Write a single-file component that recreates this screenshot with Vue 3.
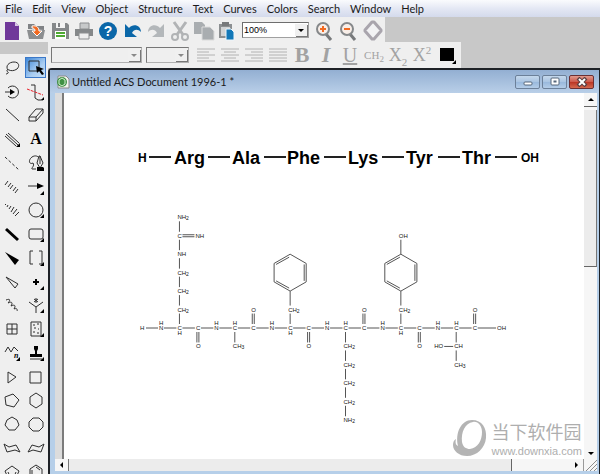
<template>
  <div class="app">
    <nav class="menubar">
      <button v-for="item in menus" :key="item" type="button">{{ item }}</button>
    </nav>

    <div class="main-toolbar">
      <div class="toolbar-panel">
        <button v-for="icon in mainIcons" :key="icon.name" type="button" class="tool-btn" :aria-label="icon.name">
          <svg width="24" height="24" viewBox="0 0 24 24">
            <component :is="s.t || 'path'" v-for="(s, i) in icon.shapes" :key="i" v-bind="s.a" />
            <text v-if="icon.text" x="12" y="18" text-anchor="middle" class="help-mark">{{ icon.text }}</text>
          </svg>
        </button>
        <div class="combo zoom-combo">
          <select v-model="zoom" aria-label="Zoom">
            <option>100%</option>
            <option>200%</option>
          </select>
          <span class="combo-arrow"></span>
        </div>
        <button v-for="icon in zoomIcons" :key="icon.name" type="button" class="tool-btn" :aria-label="icon.name">
          <svg width="24" height="24" viewBox="0 0 24 24">
            <component :is="s.t || 'path'" v-for="(s, i) in icon.shapes" :key="i" v-bind="s.a" />
          </svg>
        </button>
      </div>
    </div>

    <div class="workspace">
      <aside class="palette">
        <div class="palette-grid">
          <button
            v-for="(tool, index) in tools"
            :key="tool.name"
            type="button"
            :class="{ active: index === activeTool }"
            :aria-label="tool.name"
            @click="activeTool = index"
          >
            <svg width="24" height="24" viewBox="0 0 24 24">
              <path v-for="(p, i) in tool.paths" :key="i" :d="p.d" :class="p.c || 'line'" />
              <text v-if="tool.text" x="12" y="17" text-anchor="middle" class="tool-letter">{{ tool.text }}</text>
              <text v-if="tool.sub" x="14" y="17" class="tool-sub">{{ tool.sub }}</text>
              <path v-if="tool.flyout" d="M20 16v4h-4z" class="solid" />
            </svg>
          </button>
        </div>
      </aside>

      <div class="content">
        <div class="format-row">
          <div class="format-bar">
            <div class="combo font-combo dim">
              <select aria-label="Font"><option></option></select>
              <span class="combo-arrow"></span>
            </div>
            <div class="combo size-combo dim">
              <select aria-label="Font size"><option></option></select>
              <span class="combo-arrow"></span>
            </div>
            <button v-for="a in aligns" :key="a.name" type="button" class="format-btn" :aria-label="a.name">
              <svg width="20" height="16" viewBox="0 0 20 16"><path :d="a.d" class="align" /></svg>
            </button>
            <button type="button" class="format-btn bold">B</button>
            <button type="button" class="format-btn italic">I</button>
            <button type="button" class="format-btn underline">U</button>
            <button type="button" class="format-btn formula">CH<sub>2</sub></button>
            <button type="button" class="format-btn script">X<sub>2</sub></button>
            <button type="button" class="format-btn script">X<sup>2</sup></button>
            <button type="button" class="format-btn" aria-label="Color">
              <svg width="20" height="18" viewBox="0 0 20 18">
                <path d="M4 2h14v13H4z" fill="#000" />
                <path d="M20 14v4h-4z" fill="#000" stroke="#efefef" stroke-width="1" paint-order="stroke" />
              </svg>
            </button>
          </div>
        </div>

        <section class="window">
          <header class="titlebar">
            <svg class="doc-icon" width="14" height="14" viewBox="0 0 14 14">
              <path d="M2 1h8l3 3v9H2z" fill="#f4f4f0" stroke="#8a8a8a" />
              <circle cx="6" cy="7" r="5" fill="#3f9144" />
              <path d="M3 5l3-2 3 2v4l-3 2-3-2z" fill="none" stroke="#d4f0d0" />
            </svg>
            <h1>Untitled ACS Document 1996-1 *</h1>
            <div class="window-buttons">
              <button type="button" aria-label="Minimize">
                <svg width="12" height="10" viewBox="0 0 12 10"><rect x="2" y="5" width="8" height="3" rx="1" fill="#fff" stroke="#56677b" /></svg>
              </button>
              <button type="button" aria-label="Maximize">
                <svg width="12" height="10" viewBox="0 0 12 10">
                  <rect x="2" y="1" width="8" height="7" rx="1" fill="#fff" stroke="#56677b" />
                  <rect x="5" y="4" width="2" height="1" fill="#8fb0d4" stroke="#56677b" />
                </svg>
              </button>
              <button type="button" class="close" aria-label="Close">
                <svg width="12" height="10" viewBox="0 0 12 10">
                  <path d="M2 1l8 8M10 1l-8 8" stroke="#5b3f42" stroke-width="4" />
                  <path d="M3 2l6 6M9 2l-6 6" stroke="#fff" stroke-width="2" />
                </svg>
              </button>
            </div>
          </header>

          <div class="window-body">
            <div class="gutter"></div>
            <div class="canvas">
              <svg width="519" height="365" viewBox="0 0 519 365">
                <g class="sequence">
                  <text v-for="r in residues" :key="r.x" :x="r.x" :y="r.end ? 69 : 71" :class="{ end: r.end }">{{ r.label }}</text>
                  <path v-for="x in dashes" :key="x" :d="`M${x} 64h22`" />
                </g>
                <g class="bonds">
                  <path v-for="(d, i) in bonds" :key="i" :d="d" />
                </g>
                <g class="atoms">
                  <text v-for="(a, i) in atoms" :key="i" :x="a.x" :y="a.y" :text-anchor="a.anchor || 'start'">
                    {{ a.label }}<tspan v-if="a.sub" dy="1" class="sub">{{ a.sub }}</tspan>
                  </text>
                </g>
              </svg>
              <div class="watermark">
                <svg width="36" height="38" viewBox="0 0 36 38">
                  <path
                    fill-rule="evenodd"
                    d="M20 1C30 1 35 9 34 19C33 29 25 37 15 37C7 37 1 32 1 26C1 23 2 21 4 20C3 24 4 26 6 27C3 14 9 1 20 1ZM21 3C13 4 9 13 10 23C11 28 14 30 18 30C26 29 30 21 30 13C30 7 26 2 21 3Z"
                  />
                </svg>
                <div>
                  <p class="mark-name">当下软件园</p>
                  <p class="mark-url">www.downxia.com</p>
                </div>
              </div>
            </div>
            <div class="vscroll">
              <button type="button" aria-label="Scroll up"><i class="up"></i></button>
              <div class="vthumb"></div>
              <div class="track"></div>
              <button type="button" aria-label="Scroll down"><i class="down"></i></button>
            </div>
          </div>
          <div class="hscroll">
            <button type="button" aria-label="Scroll left"><i class="left"></i></button>
            <div class="hthumb"></div>
            <div class="track"></div>
            <button type="button" aria-label="Scroll right"><i class="right"></i></button>
            <svg class="grip" width="13" height="12" viewBox="0 0 13 12">
              <path d="M2 12L13 1M6 12L13 5M10 12L13 9" stroke="#8c8c8c" fill="none" />
            </svg>
          </div>
        </section>
      </div>
    </div>
  </div>
</template>

<script setup>
import { ref } from 'vue';

const menus = ['File', 'Edit', 'View', 'Object', 'Structure', 'Text', 'Curves', 'Colors', 'Search', 'Window', 'Help'];
const zoom = ref('100%');
const activeTool = ref(1);

const gray = '#808285';
const pale = '#a9adb0';
const blue = '#0b67a8';

// main toolbar
const mainIcons = [
  { name: 'New', shapes: [
    { a: { d: 'M5 4h10l4 4v14H5z', fill: '#70389a' } },
    { a: { d: 'M15 4v4h4z', fill: '#d9c7e6' } }
  ] },
  { name: 'Open', shapes: [
    { a: { d: 'M4 11V6h6l2 2h8v4', fill: gray } },
    { a: { d: 'M3 12h18l-2 9H5z', fill: '#8c8e90' } },
    { a: { d: 'M8 8c5-1 7 2 7 5h3l-5 5-5-5h3c0-2-1-3-3-3z', fill: '#f26a21', stroke: '#fff', 'stroke-width': 1 } }
  ] },
  { name: 'Save', shapes: [
    { a: { d: 'M4 5h15l2 2v14H4z', fill: '#85888a' } },
    { a: { d: 'M8 5h9v5H8z', fill: '#f4f4f4' } },
    { a: { d: 'M10 5h2v4h-2z', fill: gray } },
    { a: { d: 'M7 13h11v8H7z', fill: '#fff' } },
    { a: { d: 'M8 15h9M8 18h9', stroke: '#4faa32', 'stroke-width': 2 } }
  ] },
  { name: 'Print', shapes: [
    { a: { d: 'M8 5h9v6H8z', fill: '#c7c9ca', stroke: '#8c8e90' } },
    { a: { d: 'M3 11h18v7H3z', fill: '#85888a' } },
    { a: { d: 'M7 15h10v6H7z', fill: '#eeeeee', stroke: '#8c8e90' } }
  ] },
  { name: 'Help', text: '?', shapes: [
    { t: 'circle', a: { cx: 12, cy: 13, r: 9, fill: blue } }
  ] },
  { name: 'Undo', shapes: [
    { a: { d: 'M5 6v13h12l-5-4c2-4 6-4 9-1c0-7-8-9-12-4z', fill: blue } }
  ] },
  { name: 'Redo', shapes: [
    { a: { d: 'M20 6v13H8l5-4c-2-4-6-4-9-1c0-7 8-9 12-4z', fill: '#b3b7ba' } }
  ] },
  { name: 'Cut', shapes: [
    { a: { d: 'M6 4l10 14M18 4L8 18', stroke: '#b1b3b5', 'stroke-width': 3, fill: 'none' } },
    { t: 'circle', a: { cx: 7, cy: 19, r: 3, fill: '#efefef', stroke: '#b1b3b5', 'stroke-width': 2 } },
    { t: 'circle', a: { cx: 17, cy: 19, r: 3, fill: '#efefef', stroke: '#b1b3b5', 'stroke-width': 2 } }
  ] },
  { name: 'Copy', shapes: [
    { a: { d: 'M2 4h8l3 3v9H2z', fill: pale } },
    { a: { d: 'M10 9h8l4 4v9H10z', fill: pale, stroke: '#dcdcdc' } }
  ] },
  { name: 'Paste', shapes: [
    { a: { d: 'M3 6h13v14H3z', fill: '#8c8f91' } },
    { a: { d: 'M5 9h9v9H5z', fill: '#d2d4d5' } },
    { a: { d: 'M6 4h7v4H6z', fill: '#77797b' } },
    { a: { d: 'M10 11h5l3 3v8h-8z', fill: '#1378b8', stroke: '#eef6fb' } }
  ] }
];

const lens = [
  { a: { d: 'M14 16l5 6', stroke: '#77797b', 'stroke-width': 3 } },
  { t: 'circle', a: { cx: 11, cy: 11, r: 6, fill: '#f8eee8', stroke: '#85888a', 'stroke-width': 2 } }
];
const zoomIcons = [
  { name: 'Zoom in', shapes: [...lens, { a: { d: 'M8 11h6M11 8v6', stroke: '#f26a21', 'stroke-width': 2 } }] },
  { name: 'Zoom out', shapes: [...lens, { a: { d: 'M8 11h6', stroke: '#f26a21', 'stroke-width': 2 } }] },
  { name: 'Clean up', shapes: [
    { a: { d: 'M12 4h2l7 8v1l-7 8h-2l-7-8v-1z', fill: '#f2f2f4', stroke: '#a9a5ad', 'stroke-width': 3, 'stroke-linejoin': 'round' } }
  ] }
];

const aligns = [
  { name: 'Align left', d: 'M1 2h18M1 5h12M1 8h18M1 11h12M1 14h18' },
  { name: 'Center', d: 'M1 2h18M4 5h12M1 8h18M4 11h12M1 14h18' },
  { name: 'Align right', d: 'M1 2h18M7 5h12M1 8h18M7 11h12M1 14h18' },
  { name: 'Justify', d: 'M1 2h18M1 5h18M1 8h18M1 11h18M1 14h18' }
];

// tool palette, two per row
const tools = [
  { name: 'Lasso', paths: [{ d: 'M8 14C5 10 9 6 14 6C19 6 20 10 17 13C14 15 11 15 9 14C7 13 6 15 8 16C9 17 7 18 6 18' }] },
  { name: 'Marquee', paths: [{ d: 'M5 6h10v10H5z' }, { d: 'M12 11l8 3-3 1 3 4-2 1-3-4-2 2z', c: 'solid' }] },
  { name: 'Structure perspective', paths: [{ d: 'M8 8a6 6 0 1 1 0 8' }, { d: 'M5 12h5' }, { d: 'M10 9l5 3-5 3z', c: 'solid' }] },
  { name: 'Mass fragmentation', paths: [{ d: 'M7 5h4v13l3 2h5' }, { d: 'M3 9l16 6', c: 'red' }, { d: 'M20 17v3h-3z', c: 'solid' }] },
  { name: 'Solid bond', paths: [{ d: 'M6 6l13 12' }] },
  { name: 'Eraser', paths: [{ d: 'M5 14l7-8h7l-7 8zM5 14v4h7v-4M12 18l7-8V6' }] },
  { name: 'Multiple bonds', flyout: true, paths: [{ d: 'M5 9l11 10M8 6l11 10' }, { d: 'M6 7l12 11' }] },
  { name: 'Text', text: 'A', paths: [] },
  { name: 'Dashed bond', paths: [{ d: 'M5 6l14 13', c: 'dashed' }] },
  { name: 'Pen', flyout: true, paths: [{ d: 'M12 18H8c-1-1 3-3 1-6c-4 2-5-3-1-6c3-2 6-1 7 1M15 5l-2 7 3 5 3-5-3-7zM16 5v8' }, { d: 'M13 16h6v4h-6z', c: 'solid' }] },
  { name: 'Hashed bond', paths: [{ d: 'M5 10l3-4M8 12l3-4M10 14l3-4M13 16l3-4M15 18l3-4' }] },
  { name: 'Arrow', flyout: true, paths: [{ d: 'M4 11h10' }, { d: 'M13 8l7 3-7 3z', c: 'solid' }] },
  { name: 'Hashed wedge', paths: [{ d: 'M5 7l1-1M7 9l1-2M9 11l2-3M11 14l3-5M13 16l4-5M15 18l4-4' }] },
  { name: 'Orbitals', flyout: true, paths: [{ d: 'M19 12a7 7 0 1 1-14 0a7 7 0 1 1 14 0z' }] },
  { name: 'Bold bond', paths: [{ d: 'M6 7l12 11', c: 'bold' }] },
  { name: 'Drawing elements', flyout: true, paths: [{ d: 'M7 7h10a2 2 0 0 1 2 2v6a2 2 0 0 1-2 2H7a2 2 0 0 1-2-2V9a2 2 0 0 1 2-2z' }] },
  { name: 'Wedge', paths: [{ d: 'M5 6l14 8-4 5z', c: 'solid' }] },
  { name: 'Brackets', flyout: true, paths: [{ d: 'M9 5H6v13h3M15 5h3v13h-3' }] },
  { name: 'Hollow wedge', paths: [{ d: 'M6 7l12 7-3 4z' }] },
  { name: 'Chemical symbols', flyout: true, paths: [{ d: 'M9 12h6M12 9v6', c: 'plus' }] },
  { name: 'Wavy bond', paths: [{ d: 'M6 7c5-2 4 1 2 3c4-2 5 0 3 3c4-2 5 0 3 3c2-1 4 0 3 2' }] },
  { name: 'Query', flyout: true, paths: [{ d: 'M5 9l7 5 7-5M12 14v6M12 5v5M10 6l4 3M14 6l-4 3' }] },
  { name: 'Table', paths: [{ d: 'M7 7h10v10H7zM12 7v10M7 12h10' }] },
  { name: 'TLC plate', flyout: true, paths: [{ d: 'M7 5h10v14H7z' }, { d: 'M9 8h2M13 7h2M10 11h2M14 12h1M9 15h2M13 16h2' }] },
  { name: 'Acyclic chain', flyout: true, sub: 'n', paths: [{ d: 'M5 11l3-5 3 5 3-5 4 4' }] },
  { name: 'Templates', flyout: true, paths: [{ d: 'M10 5h4v3l-1 2v3h5v3H6v-3h5v-3l-1-2z', c: 'solid' }, { d: 'M6 18h12' }] },
  { name: 'Cyclopropane', paths: [{ d: 'M8 7l8 5-8 6z' }] },
  { name: 'Cyclobutane', paths: [{ d: 'M6 7h11v11H6z' }] },
  { name: 'Cyclopentane', paths: [{ d: 'M5 9l8-3 6 6-5 7-8-2z' }] },
  { name: 'Cyclohexane', paths: [{ d: 'M12 5l6 4v7l-6 4-6-4V9z' }] },
  { name: 'Cycloheptane', paths: [{ d: 'M12 5l5 3 2 5-4 5H9l-4-5 2-5z' }] },
  { name: 'Cyclooctane', paths: [{ d: 'M9 6h6l4 4v5l-4 4H9l-4-4v-5z' }] },
  { name: 'Chair left', paths: [{ d: 'M4 8l5 3 7-2 4 7-5-2-8 2z' }] },
  { name: 'Chair right', paths: [{ d: 'M20 8l-5 3-7-2-4 7 5-2 8 2z' }] },
  { name: 'Cyclopentadiene', paths: [{ d: 'M5 11l7-5 7 5-4 9H9zM8 12l3 7M16 12l-3 7' }] },
  { name: 'Benzene', paths: [{ d: 'M12 5l6 4v7l-6 4-6-4V9zM8 10v6M12 7l4 3' }] }
];

// peptide written as a sequence
const residues = [
  { label: 'H', x: 74, end: true },
  { label: 'Arg', x: 110 },
  { label: 'Ala', x: 168 },
  { label: 'Phe', x: 223 },
  { label: 'Lys', x: 284 },
  { label: 'Tyr', x: 342 },
  { label: 'Thr', x: 398 },
  { label: 'OH', x: 457, end: true }
];
const dashes = [85, 144, 200, 260, 318, 374, 431];

// expanded structure: backbone of 18 atoms on a fixed bond length
const step = 18.45;
const base = 235;
const px = (i) => 97 + i * step;
const py = (n) => base - n * step;
const atoms = [];
const bonds = [];

const atom = (x, y, label, sub) => atoms.push({ x: x - 2, y: y + 2, label, sub });
const hbond = (x1, x2, y) => bonds.push(`M${x1 + 3} ${y}H${x2 - 3}`);
const vbond = (x, y1, y2) => bonds.push(`M${x} ${y1 + 4}V${y2 - 4}`);

atoms.push({ x: 76, y: base + 2, label: 'H' });
hbond(79, px(0), base);
for (let r = 0; r < 6; r++) {
  const n = px(r * 3);
  const alpha = px(r * 3 + 1);
  const co = px(r * 3 + 2);
  // side chains point up on Arg, Phe and Tyr
  const up = r % 2 === 0;
  atom(n, base, 'N');
  atom(n, base - 5, 'H');
  atom(alpha, base, 'C');
  atom(alpha, up ? base + 5 : base - 5, 'H');
  atom(co, base, 'C');
  hbond(n, alpha, base);
  hbond(alpha, co, base);
  if (r < 5) hbond(co, px(r * 3 + 3), base);
  const oy = up ? py(-1) : py(1);
  atom(co, oy, 'O');
  const top = Math.min(oy, base);
  vbond(co - 1, top, top + step);
  vbond(co + 1, top, top + step);
}
atoms.push({ x: 433, y: base + 2, label: 'OH' });
hbond(px(17), 435, base);

// vertical substituents, listed outward from the backbone
const sideChain = (x, dir, groups) => {
  groups.forEach(([label, sub], i) => {
    const y = py(dir * (i + 1));
    atom(x, y, label, sub);
    const prev = py(dir * i);
    vbond(x, Math.min(y, prev), Math.max(y, prev));
  });
};
const arg = px(1);
sideChain(arg, 1, [['CH', '2'], ['CH', '2'], ['CH', '2'], ['NH'], ['C'], ['NH', '2']]);
bonds.push(`M${arg + 3} ${py(5) - 1}h12M${arg + 3} ${py(5) + 1}h12`);
atoms.push({ x: arg + 16, y: py(5) + 2, label: 'NH' });
sideChain(px(4), -1, [['CH', '3']]);
sideChain(px(7), 1, [['CH', '2']]);
sideChain(px(10), -1, [['CH', '2'], ['CH', '2'], ['CH', '2'], ['CH', '2'], ['NH', '2']]);
sideChain(px(13), 1, [['CH', '2']]);
sideChain(px(16), -1, [['CH'], ['CH', '3']]);
atoms.push({ x: px(16) - 13, y: py(-1) + 2, label: 'HO', anchor: 'end' });
hbond(px(16) - 15, px(16), py(-1));

// aromatic rings
const ring = (x) => {
  const cy = py(3);
  const w = step * 0.87;
  const h = step / 2;
  bonds.push(`M${x} ${cy - step}l${w} ${h}v${step}l${-w} ${h}l${-w} ${-h}v${-step}z`);
  bonds.push(`M${x - 1} ${cy - step + 3}l${3 - w} ${h - 2}M${x + w - 2} ${cy - h + 1}v${step - 2}M${x - 1} ${cy + step - 3}l${3 - w} ${2 - h}`);
  bonds.push(`M${x} ${cy + step}V${py(1) - 4}`);
};
ring(px(7));
ring(px(13));
vbond(px(13), py(5), py(4) + 4);
atom(px(13), py(5), 'OH');
</script>

<style>
html,
body {
  margin: 0;
  overflow: hidden;
}
</style>

<style scoped>
.app {
  display: flex;
  flex-direction: column;
  height: 100vh;
  background: #c8c8c8;
  font-family: "Open Sans", "Liberation Sans", sans-serif;
  color: #1a1a1a;
  overflow: hidden;
}

button {
  margin: 0;
  padding: 0;
  border: 0;
  background: none;
  color: inherit;
  font-family: inherit;
}

.menubar {
  display: flex;
  flex: none;
  height: 17px;
  background: linear-gradient(#fafbfd, #e4e8f4 50%, #d4daec);
}

.menubar button {
  padding: 0 5px;
  font-family: Lato, "Open Sans", sans-serif;
  font-size: 11px;
  line-height: 16px;
}

.main-toolbar {
  display: flex;
  flex: none;
  height: 25px;
}

.toolbar-panel {
  display: flex;
  align-items: center;
  width: 385px;
  background: #efefef;
}

.tool-btn {
  width: 24px;
  height: 24px;
}

.tool-btn svg,
.palette svg,
.format-btn svg,
.window-buttons svg {
  display: block;
}

.help-mark {
  font: bold 14px "Liberation Sans", sans-serif;
  fill: #fff;
}

/* drop-downs */
.combo {
  position: relative;
  box-sizing: border-box;
  height: 16px;
  border: 1px solid #6e6e6e;
  border-right-color: #a0a0a0;
  border-bottom-color: #a0a0a0;
  background: #fff;
}

.combo select {
  display: block;
  width: 100%;
  height: 14px;
  padding: 0 0 0 1px;
  border: 0;
  background: transparent;
  appearance: none;
  font: 9px "Liberation Sans", sans-serif;
  line-height: 12px;
  color: #000;
}

.combo-arrow {
  position: absolute;
  top: 1px;
  right: 1px;
  width: 12px;
  height: 12px;
  background: #f0f0f0;
  box-shadow: 1px 1px 0 #777;
  pointer-events: none;
}

.combo-arrow::after {
  content: "";
  position: absolute;
  top: 5px;
  left: 3px;
  border: 3px solid transparent;
  border-top-color: #000;
}

.zoom-combo {
  width: 67px;
  margin: 0 3px 0 2px;
}

.font-combo {
  width: 91px;
}

.size-combo {
  width: 43px;
  margin: 0 5px 0 4px;
}

.dim {
  border-color: #777 #b0b0b0 #b0b0b0 #777;
  background: #efefef;
}

.dim .combo-arrow::after {
  border-top-color: #8a8a8a;
}

.workspace {
  display: flex;
  flex: 1;
  min-height: 0;
}

/* left palette */
.palette {
  flex: none;
  width: 48px;
  padding-top: 12px;
  overflow: hidden;
}

.palette-grid {
  display: grid;
  grid-template-columns: 24px 24px;
  grid-auto-rows: 24px 23px 24px 24px;
  padding-top: 2px;
  background: #efefef;
}

.palette button {
  overflow: hidden;
}

.palette .active {
  height: 21px;
  margin: 1px 2px 1px 1px;
  border: 1px solid #3b78c8;
  background: linear-gradient(135deg, #3f88d8, #a9cdf2 60%, #c9e0f6);
}

.palette .active svg {
  margin: -3px 0 0 -2px;
}

.line {
  fill: none;
  stroke: #2e2e2e;
  stroke-width: 1;
}

.solid {
  fill: #000;
}

.dashed {
  fill: none;
  stroke: #2e2e2e;
  stroke-dasharray: 3 2;
}

.red {
  fill: none;
  stroke: #e8202a;
  stroke-dasharray: 3 1;
}

.bold {
  stroke: #000;
  stroke-width: 3;
}

.plus {
  fill: none;
  stroke: #000;
  stroke-width: 2;
}

.tool-letter {
  font: bold 16px "Liberation Serif", serif;
}

.tool-sub {
  font: italic bold 8px "Liberation Serif", serif;
}

.content {
  display: flex;
  flex: 1;
  flex-direction: column;
  min-width: 0;
}

.format-row {
  display: flex;
  flex: none;
  height: 26px;
}

.format-bar {
  display: flex;
  align-items: center;
  width: 410px;
  padding-left: 3px;
  background: #efefef;
}

.format-btn {
  flex: none;
  width: 24px;
  height: 24px;
  color: #a2a2a2;
  font-family: "Liberation Serif", serif;
  font-size: 22px;
  line-height: 24px;
  white-space: nowrap;
}

.format-btn svg {
  margin: 0 auto;
}

.align {
  stroke: #b2b2b2;
  fill: none;
}

.bold.format-btn {
  font-weight: bold;
}

.italic {
  font-style: italic;
  font-weight: bold;
}

.underline {
  font-size: 20px;
  text-decoration: underline;
}

.formula {
  font-size: 11px;
}

.script {
  font-size: 18px;
}

sub,
sup {
  font-size: 11px;
  line-height: 0;
}

.formula sub {
  font-size: 9px;
}

/* document window */
.window {
  display: flex;
  flex: 1;
  flex-direction: column;
  min-height: 0;
  box-sizing: border-box;
  padding: 0 2px 3px 5px;
  border: 2px solid #1e2126;
  border-right-width: 1px;
  border-bottom: 0;
  border-radius: 4px 0 0 0;
  background: #b6cfe9;
}

.titlebar {
  display: flex;
  flex: none;
  align-items: center;
  height: 23px;
  margin: 0 -2px 0 -5px;
  padding: 0 5px 0 6px;
  background: linear-gradient(#93afd2, #b9cfe8);
}

.titlebar h1 {
  flex: 1;
  margin: 0 0 0 2px;
  font-family: Lato, "Open Sans", sans-serif;
  font-size: 11px;
  font-weight: normal;
  line-height: 20px;
}

.window-buttons {
  display: flex;
  gap: 2px;
}

.window-buttons button {
  display: grid;
  place-items: center;
  box-sizing: border-box;
  width: 25px;
  height: 14px;
  border: 1px solid #6c8099;
  border-radius: 2px;
  background: linear-gradient(#c5d8ec, #a9c4e2 50%, #98b8dc 50%, #b4cde8);
}

.window-buttons .close {
  border-color: #6b2f33;
  background: linear-gradient(#e09a8e, #cc5648 50%, #b93323 50%, #d4694f);
}

.window-body {
  display: flex;
  flex: 1;
  min-height: 0;
}

.gutter {
  flex: none;
  width: 7px;
  border-right: 2px solid #7c7c7c;
  background: #dcdcdc;
}

.canvas {
  position: relative;
  flex: 1;
  min-width: 0;
  overflow: hidden;
  background: #fff;
}

.sequence text {
  font: bold 18px "Liberation Sans", sans-serif;
  fill: #000;
}

.sequence .end {
  font-size: 12px;
}

.sequence path {
  stroke: #222;
  stroke-width: 2;
}

.bonds path {
  fill: none;
  stroke: #555;
  stroke-width: 1;
}

.atoms text {
  font: 6px "Liberation Sans", sans-serif;
  fill: #111;
}

.atoms .sub {
  font-size: 5px;
}

.watermark {
  position: absolute;
  right: 2px;
  bottom: 0;
  display: flex;
  gap: 4px;
  color: #aeaeae;
}

.watermark svg {
  fill: #b4b4b4;
}

.watermark p {
  margin: 0;
}

.mark-name {
  font: 18px "Noto Sans CJK SC", sans-serif;
  line-height: 24px;
}

.mark-url {
  font: 11px "Liberation Sans", sans-serif;
  line-height: 16px;
}

/* scroll bars */
.vscroll {
  display: flex;
  flex: none;
  flex-direction: column;
  width: 13px;
  background: #f6f6f6;
}

.vscroll button,
.hscroll button {
  display: grid;
  flex: none;
  place-items: center;
  width: 13px;
  height: 12px;
  background: #f6f6f6;
}

.vscroll button:first-child {
  height: 14px;
  border-bottom: 1px solid #666;
}

.vthumb {
  flex: 0 0 43%;
  margin-top: 3px;
  box-sizing: border-box;
  border-right: 1px solid #777;
  border-bottom: 1px solid #666;
  background: #ececec;
}

.track {
  flex: 1;
}

.hscroll {
  display: flex;
  flex: none;
  height: 12px;
  background: #f6f6f6;
}

.hthumb {
  flex: 0 0 82%;
  box-sizing: border-box;
  border-right: 1px solid #666;
  border-left: 1px solid #777;
  background: #ececec;
}

.grip {
  flex: none;
  border-left: 1px solid #999;
}

i {
  border: 3px solid transparent;
}

.up {
  border-top-width: 0;
  border-bottom-color: #000;
}

.down {
  border-bottom-width: 0;
  border-top-color: #000;
}

.left {
  border-left-width: 0;
  border-right-color: #000;
}

.right {
  border-right-width: 0;
  border-left-color: #000;
}
</style>
